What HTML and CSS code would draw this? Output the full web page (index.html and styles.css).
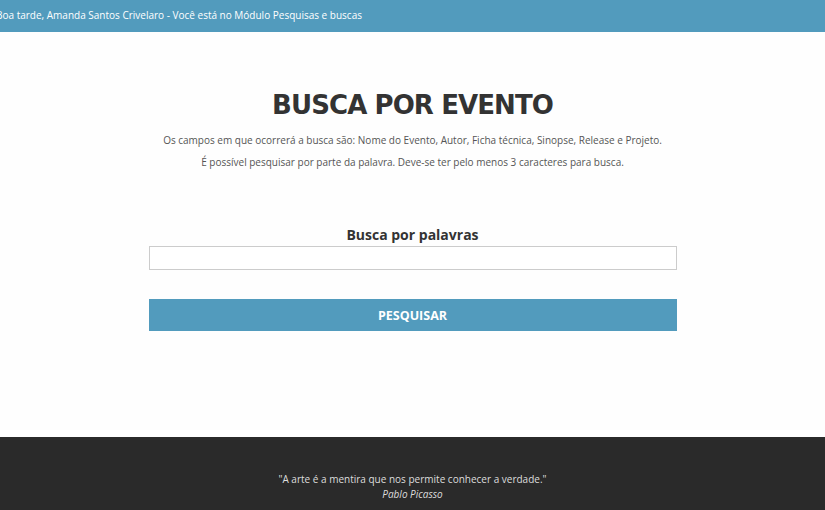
FILE: index.html
```html
<!DOCTYPE html>
<html lang="pt-BR">
<head>
<meta charset="utf-8">
<title>Busca por evento</title>
<link rel="stylesheet" href="styles.css">
</head>
<body>
<header class="topbar">
  <span class="greeting">Boa tarde, Amanda Santos Crivelaro - Você está no Módulo Pesquisas e buscas</span>
</header>
<main class="content">
  <h1 class="title">BUSCA POR EVENTO</h1>
  <p class="info">Os campos em que ocorrerá a busca são: Nome do Evento, Autor, Ficha técnica, Sinopse, Release e Projeto.</p>
  <p class="info">É possível pesquisar por parte da palavra. Deve-se ter pelo menos 3 caracteres para busca.</p>
  <form class="search">
    <label class="label" for="q">Busca por palavras</label>
    <input class="field" id="q" type="text">
    <button class="btn" type="button">PESQUISAR</button>
  </form>
</main>
<footer class="footer">
  <p class="quote">"A arte é a mentira que nos permite conhecer a verdade."</p>
  <p class="author">Pablo Picasso</p>
</footer>
</body>
</html>
```
FILE: styles.css
```css
* { box-sizing: border-box; }
html, body { margin: 0; padding: 0; }
body {
  background: #fefefe;
  font-family: "Open Sans", "Liberation Sans", sans-serif;
  color: #555;
  height: 510px;
  display: flex;
  flex-direction: column;
  overflow: hidden;
}
.topbar {
  height: 32px;
  background: #529bbd;
  color: #fff;
  font-size: 10px;
  display: flex;
  align-items: center;
  padding-bottom: 2px;
  white-space: nowrap;
}
.greeting { margin-left: -4px; }
.content {
  flex: 1;
  display: flex;
  flex-direction: column;
  align-items: center;
  padding-top: 58px;
}
.title {
  margin: 0 0 9px;
  font-family: "DejaVu Sans", sans-serif;
  font-weight: 700;
  font-size: 26px;
  line-height: 30px;
  letter-spacing: -0.9px;
  color: #333;
}
.info {
  margin: 0;
  font-size: 10px;
  line-height: 22px;
  color: #555;
}
.search {
  width: 528px;
  margin-top: 52px;
  display: flex;
  flex-direction: column;
  align-items: center;
}
.label {
  font-weight: 700;
  font-size: 14px;
  line-height: 20px;
  color: #333;
  margin-bottom: 1px;
}
.field {
  width: 100%;
  height: 24px;
  border: 1px solid #ccc;
  background: #fff;
  margin: 0 0 29px;
}
.btn {
  width: 100%;
  height: 32px;
  border: 0;
  background: #529bbd;
  color: #fff;
  font-family: "Open Sans", sans-serif;
  font-weight: 700;
  font-size: 12.5px;
}
.footer {
  height: 73px;
  background: #2a2a2a;
  color: #ddd;
  text-align: center;
  font-size: 10px;
  padding-top: 35px;
}
.quote, .author { margin: 0; line-height: 15px; }
.author { font-style: italic; }
```
